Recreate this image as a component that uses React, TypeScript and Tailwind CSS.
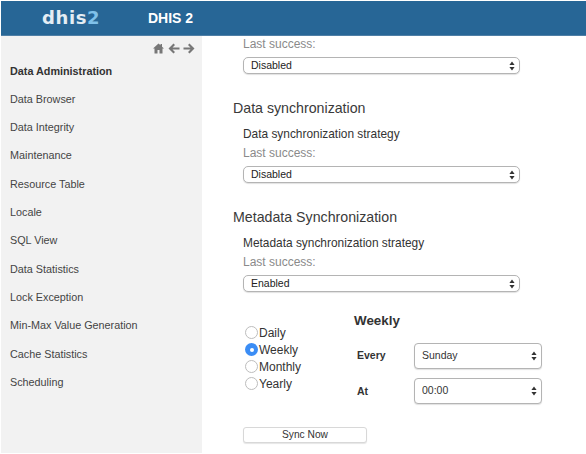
import React from "react";

const menu = ["Data Browser","Data Integrity","Maintenance","Resource Table","Locale","SQL View","Data Statistics","Lock Exception","Min-Max Value Generation","Cache Statistics","Scheduling"];

function Arrows() {
  return (
    <svg width="6" height="10" viewBox="0 0 6 10" className="absolute right-[5px] top-1/2 -translate-y-1/2 pointer-events-none">
      <path d="M3 0.5 L5.6 4 H0.4 Z M3 9.5 L5.6 6 H0.4 Z" fill="#333" />
    </svg>
  );
}

function Sel({ value, cls, textCls }: { value: string; cls: string; textCls: string }) {
  return (
    <div className={`relative ${cls}`}>
      <select defaultValue={value} className={`block appearance-none w-full h-full bg-white outline-none border border-[#b4b4b4] shadow-[0_1px_1px_rgba(0,0,0,0.12)] ${textCls}`}>
        <option>{value}</option>
      </select>
      <Arrows />
    </div>
  );
}

function Wide({ value }: { value: string }) {
  return <Sel value={value} cls="w-[277px] h-[17px] ml-[10px]" textCls="rounded-[5px] pl-[7px] text-[10.5px] leading-none text-[#222]" />;
}

function Section({ title, strategy, value }: { title: string; strategy: string; value: string }) {
  return (
    <section className="flex flex-col">
      <h2 className="text-[14.2px] leading-[18px] text-[#3a3a3a]">{title}</h2>
      <p className="ml-[10px] mt-[8.5px] text-[11.9px] leading-[16px] text-[#333]">{strategy}</p>
      <p className="ml-[10px] mt-[3px] text-[12px] leading-[16px] text-[#8a8a8a]">Last success:</p>
      <div className="mt-[5.5px]"><Wide value={value} /></div>
    </section>
  );
}

function Radio({ label, checked }: { label: string; checked?: boolean }) {
  return (
    <label className="flex items-center h-[17px] gap-[1px] text-[12px] text-[#333]">
      {checked ? (
        <span className="w-[13px] h-[13px] rounded-full bg-[#3b8df5] flex items-center justify-center shrink-0">
          <span className="w-[4px] h-[4px] rounded-full bg-white" />
        </span>
      ) : (
        <span className="w-[13px] h-[13px] rounded-full bg-white border border-[#bdbdbd] shrink-0" />
      )}
      {label}
    </label>
  );
}

export default function App() {
  return (
    <div className="w-[586px] h-[454px] overflow-hidden bg-white flex flex-col pt-[1px] pl-[1px] pb-[1px] font-['Liberation_Sans',Arial,sans-serif]">
      <header className="h-[35px] shrink-0 bg-[#276696] border-b border-[#4f7fa6] flex items-center">
        <div className="w-[147px] pl-[41px] text-[18px] font-bold tracking-[0.6px] text-[#e4edf4] font-['DejaVu_Sans',sans-serif] leading-none pb-[1px]">
          dhis<span className="text-[#7fc1ea]">2</span>
        </div>
        <div className="text-[14px] font-bold text-white">DHIS 2</div>
      </header>
      <div className="flex flex-1 min-h-0">
        <aside className="w-[201px] shrink-0 bg-[#f2f2f2] flex flex-col">
          <div className="flex justify-end items-center gap-[3px] pr-[7px] pt-[4px] h-[20.5px] text-[#777]">
            <svg width="13" height="11" viewBox="0 0 24 22"><path d="M12 1 L1 11 h3 v10 h6 v-7 h4 v7 h6 V11 h3 l-4-3.6 V2 h-3 v2.7 Z" fill="currentColor" /></svg>
            <svg width="12" height="11" viewBox="0 0 24 22"><path d="M11 1 L1 11 L11 21 L14 18 L9 13 H23 V9 H9 L14 4 Z" fill="currentColor" /></svg>
            <svg width="12" height="11" viewBox="0 0 24 22"><path d="M13 1 L23 11 L13 21 L10 18 L15 13 H1 V9 H15 L10 4 Z" fill="currentColor" /></svg>
          </div>
          <nav className="flex flex-col pl-[9px] text-[10.8px] text-[#444]">
            <div className="h-[28.3px] flex items-center font-bold text-[#333]">Data Administration</div>
            {menu.map((m) => (
              <div key={m} className="h-[28.3px] flex items-center">{m}</div>
            ))}
          </nav>
        </aside>
        <main className="flex-1 flex flex-col pl-[31px] min-w-0">
          <p className="ml-[10px] text-[12px] leading-[16px] text-[#8a8a8a]">Last success:</p>
          <div className="mt-[5px]"><Wide value="Disabled" /></div>
          <div className="mt-[25px]"><Section title="Data synchronization" strategy="Data synchronization strategy" value="Disabled" /></div>
          <div className="mt-[25px]"><Section title="Metadata Synchronization" strategy="Metadata synchronization strategy" value="Enabled" /></div>
          <div className="flex ml-[12px] mt-[21px]">
            <div className="flex flex-col w-[109px] pt-[11px]">
              <Radio label="Daily" />
              <Radio label="Weekly" checked />
              <Radio label="Monthly" />
              <Radio label="Yearly" />
            </div>
            <div className="flex flex-col">
              <h3 className="text-[13.4px] font-bold leading-[16px] text-[#333]">Weekly</h3>
              <div className="flex items-center mt-[14px] ml-[3px]">
                <span className="w-[57px] text-[10.5px] font-bold text-[#333]">Every</span>
                <Sel value="Sunday" cls="w-[128px] h-[26px]" textCls="rounded-[4px] pl-[7px] text-[10.5px] text-[#333]" />
              </div>
              <div className="flex items-center mt-[9px] ml-[3px]">
                <span className="w-[57px] pt-[1px] text-[10.5px] font-bold text-[#333]">At</span>
                <Sel value="00:00" cls="w-[128px] h-[26px]" textCls="rounded-[4px] pl-[7px] text-[10.5px] text-[#333]" />
              </div>
            </div>
          </div>
          <button className="ml-[10px] mt-[23px] w-[124px] h-[16px] pt-[1px] rounded-[3px] bg-white border border-[#d8d8d8] shadow-[0_1px_1px_rgba(0,0,0,0.1)] text-[10.2px] leading-none text-[#333]">Sync Now</button>
        </main>
      </div>
    </div>
  );
}
